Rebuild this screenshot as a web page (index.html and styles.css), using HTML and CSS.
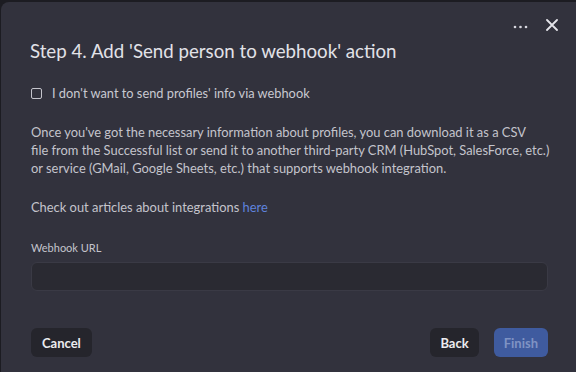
FILE: index.html
```html
<!DOCTYPE html>
<html>
<head>
<meta charset="utf-8">
<link rel="stylesheet" href="styles.css">
</head>
<body>
<div class="modal">
  <div class="topbar">
    <span class="more" aria-label="More">
      <svg width="15" height="4" viewBox="0 0 15 4"><circle cx="2" cy="2" r="1.3" fill="#d8d8e0"/><circle cx="7.5" cy="2" r="1.3" fill="#d8d8e0"/><circle cx="13" cy="2" r="1.3" fill="#d8d8e0"/></svg>
    </span>
    <span class="close" aria-label="Close">
      <svg width="12" height="12" viewBox="0 0 12 12"><path d="M1 1L11 11M11 1L1 11" stroke="#e4e4ea" stroke-width="1.8" stroke-linecap="round"/></svg>
    </span>
  </div>
  <h1 class="title">Step 4. Add 'Send person to webhook' action</h1>
  <label class="check">
    <span class="box"></span>
    <span>I don't want to send profiles' info via webhook</span>
  </label>
  <p class="desc">Once you've got the necessary information about profiles, you can download it as a CSV<br>file from the Successful list or send it to another third-party CRM (HubSpot, SalesForce, etc.)<br>or service (GMail, Google Sheets, etc.) that supports webhook integration.</p>
  <p class="desc links">Check out articles about integrations <a class="link">here</a></p>
  <div class="field">
    <div class="label">Webhook URL</div>
    <div class="input"></div>
  </div>
  <div class="footer">
    <button class="btn cancel">Cancel</button>
    <div class="right">
      <button class="btn">Back</button>
      <button class="btn primary">Finish</button>
    </div>
  </div>
</div>
</body>
</html>
```
FILE: styles.css
```css
html, body {
  margin: 0;
  padding: 0;
  background: #1c1c22;
  height: 100%;
}
body {
  font-family: Lato, "Open Sans", sans-serif;
  overflow: hidden;
}
.modal {
  margin: 2px 0 0 1px;
  height: 380px;
  background: #32323d;
  border-radius: 8px 0 0 0;
  box-sizing: border-box;
  padding: 0 28px 0 30px;
  display: flex;
  flex-direction: column;
}
.topbar {
  display: flex;
  justify-content: flex-end;
  align-items: center;
  gap: 18px;
  height: 14px;
  margin-top: 16px;
  margin-right: -10px;
}
.more { display: flex; margin-top: 4px; }
.close { display: flex; }
.title {
  margin: 7px 0 0 -1px;
  font-weight: 400;
  font-size: 18.7px;
  line-height: 24px;
  color: #e2e2e8;
}
.check {
  display: flex;
  align-items: center;
  gap: 10px;
  margin-top: 22px;
  font-size: 12.8px;
  color: #c9c9d1;
  line-height: 16px;
}
.box {
  width: 9px;
  height: 9px;
  border: 1.2px solid #c4c4cc;
  border-radius: 2px;
}
.desc {
  margin: 22px -8px 0 0;
  font-size: 12.9px;
  line-height: 18px;
  color: #c4c4cc;
  white-space: nowrap;
}
.links { margin-top: 21px; }
.link { color: #5f82dc; }
.field { margin-top: 25px; }
.label {
  font-size: 11px;
  color: #c4c4cc;
  line-height: 14px;
}
.input {
  margin-top: 7px;
  height: 29px;
  background: #2a2a32;
  border: 1px solid #3a3a45;
  border-radius: 6px;
  box-sizing: border-box;
}
.footer {
  margin-top: 37px;
  display: flex;
  justify-content: space-between;
  align-items: center;
}
.right { display: flex; gap: 15px; }
.btn {
  font-family: Lato, "Open Sans", sans-serif;
  font-size: 13px;
  font-weight: 700;
  color: #ececf0;
  background: #25252c;
  border: none;
  border-radius: 6px;
  height: 29px;
  padding: 0 10px;
}
.cancel { padding: 0 11px; }
.primary {
  background: #3f5b9f;
  color: #7f93c4;
}
```
